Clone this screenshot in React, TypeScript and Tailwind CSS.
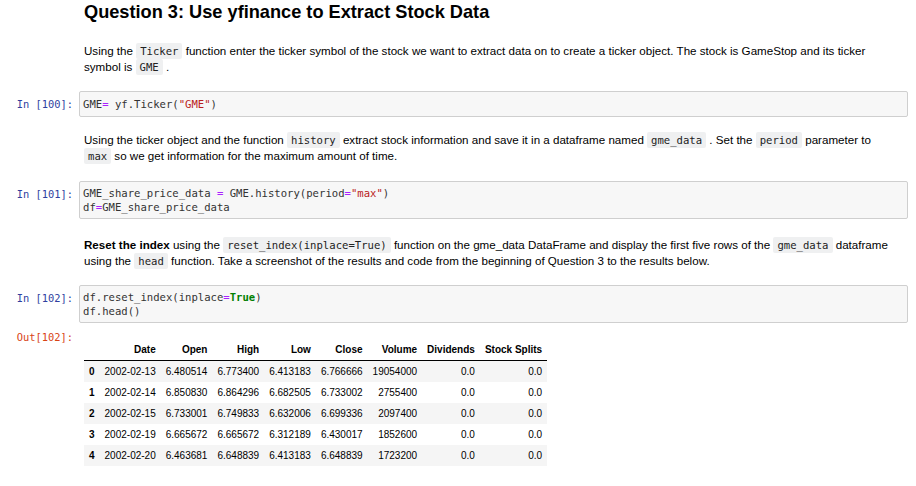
const rows = [
  ["0", "2002-02-13", "6.480514", "6.773400", "6.413183", "6.766666", "19054000", "0.0", "0.0"],
  ["1", "2002-02-14", "6.850830", "6.864296", "6.682505", "6.733002", "2755400", "0.0", "0.0"],
  ["2", "2002-02-15", "6.733001", "6.749833", "6.632006", "6.699336", "2097400", "0.0", "0.0"],
  ["3", "2002-02-19", "6.665672", "6.665672", "6.312189", "6.430017", "1852600", "0.0", "0.0"],
  ["4", "2002-02-20", "6.463681", "6.648839", "6.413183", "6.648839", "1723200", "0.0", "0.0"],
];

const headers = ["", "Date", "Open", "High", "Low", "Close", "Volume", "Dividends", "Stock Splits"];

function Code({ children }: { children: React.ReactNode }) {
  return (
    <code className="rounded-[2px] bg-[#eff0f1] px-[4px] py-[2px] font-['DejaVu_Sans_Mono','Liberation_Mono',monospace] text-[10.6px] leading-[10px] text-[#222]">
      {children}
    </code>
  );
}

function Op({ children }: { children: React.ReactNode }) {
  return <span className="text-[#aa22ff]">{children}</span>;
}

function Str({ children }: { children: React.ReactNode }) {
  return <span className="text-[#ba2121]">{children}</span>;
}

function Prompt({ label, out }: { label: string; out?: boolean }) {
  return (
    <div
      className={`w-[79px] shrink-0 pr-[6px] text-right font-['DejaVu_Sans_Mono','Liberation_Mono',monospace] text-[10.4px] leading-[14px] whitespace-pre ${
        out ? "text-[#d84315]" : "text-[#303f9f] pt-[6px]"
      }`}
    >
      {label}
    </div>
  );
}

function Markdown({ className, children }: { className: string; children: React.ReactNode }) {
  return (
    <div className={`flex ${className}`}>
      <div className="w-[84px] shrink-0" />
      <p className="h-[32px] w-[826px] text-[11.6px] leading-[16px] whitespace-nowrap text-black">{children}</p>
    </div>
  );
}

export default function App() {
  return (
    <div className="h-[486px] w-[916px] overflow-hidden bg-white font-['Liberation_Sans',Arial,sans-serif] text-black">
      <h1 className="mt-[2px] h-[20px] pl-[84px] text-[18.2px] font-bold leading-[20px]">
        Question 3: Use yfinance to Extract Stock Data
      </h1>

      <Markdown className="mt-[21px]">
        Using the <Code>Ticker</Code> function enter the ticker symbol of the stock we want to extract data on to
        create a ticker object. The stock is GameStop and its ticker
        <br />
        symbol is <Code>GME</Code> .
      </Markdown>

      <div className="mt-[16px] flex">
        <Prompt label="In [100]:" />
        <div className="w-[829px] rounded-[2px] border border-[#cfcfcf] bg-[#f7f7f7] py-[5px] pl-[3px] font-['DejaVu_Sans_Mono','Liberation_Mono',monospace] text-[10.6px] leading-[14px] whitespace-pre text-[#333]">
          GME<Op>=</Op> yf.Ticker(<Str>"GME"</Str>)
        </div>
      </div>

      <Markdown className="mt-[15px]">
        Using the ticker object and the function <Code>history</Code> extract stock information and save it in a
        dataframe named <Code>gme_data</Code> . Set the <Code>period</Code> parameter to
        <br />
        <Code>max</Code> so we get information for the maximum amount of time.
      </Markdown>

      <div className="mt-[17px] flex">
        <Prompt label="In [101]:" />
        <div className="w-[829px] rounded-[2px] border border-[#cfcfcf] bg-[#f7f7f7] py-[4px] pl-[3px] font-['DejaVu_Sans_Mono','Liberation_Mono',monospace] text-[10.6px] leading-[14px] whitespace-pre text-[#333]">
          <div>
            GME_share_price_data <Op>=</Op> GME.history(period<Op>=</Op>
            <Str>"max"</Str>)
          </div>
          <div>
            df<Op>=</Op>GME_share_price_data
          </div>
        </div>
      </div>

      <Markdown className="mt-[18px]">
        <b>Reset the index</b> using the <Code>reset_index(inplace=True)</Code> function on the gme_data DataFrame and
        display the first five rows of the <Code>gme_data</Code> dataframe
        <br />
        using the <Code>head</Code> function. Take a screenshot of the results and code from the beginning of Question
        3 to the results below.
      </Markdown>

      <div className="mt-[16px] flex">
        <Prompt label="In [102]:" />
        <div className="w-[829px] rounded-[2px] border border-[#cfcfcf] bg-[#f7f7f7] py-[4px] pl-[3px] font-['DejaVu_Sans_Mono','Liberation_Mono',monospace] text-[10.6px] leading-[14px] whitespace-pre text-[#333]">
          <div>
            df.reset_index(inplace<Op>=</Op>
            <span className="font-bold text-[#008000]">True</span>)
          </div>
          <div>df.head()</div>
        </div>
      </div>

      <div className="mt-[7px] flex">
        <Prompt label="Out[102]:" out />
        <div className="pl-[5px] pt-[10px]">
          <table className="border-collapse text-[10px] text-black">
            <thead>
              <tr className="border-b border-black">
                {headers.map((h, i) => (
                  <th key={i} className="px-[5px] py-[5px] text-right font-bold leading-[10px] whitespace-nowrap">
                    {h}
                  </th>
                ))}
              </tr>
            </thead>
            <tbody>
              {rows.map((row, r) => (
                <tr key={r} className={r % 2 === 0 ? "bg-[#f5f5f5]" : "bg-white"}>
                  {row.map((cell, c) => (
                    <td
                      key={c}
                      className={`px-[5px] py-[5px] text-right leading-[11px] whitespace-nowrap ${
                        c === 0 ? "font-bold" : ""
                      }`}
                    >
                      {cell}
                    </td>
                  ))}
                </tr>
              ))}
            </tbody>
          </table>
        </div>
      </div>
    </div>
  );
}
